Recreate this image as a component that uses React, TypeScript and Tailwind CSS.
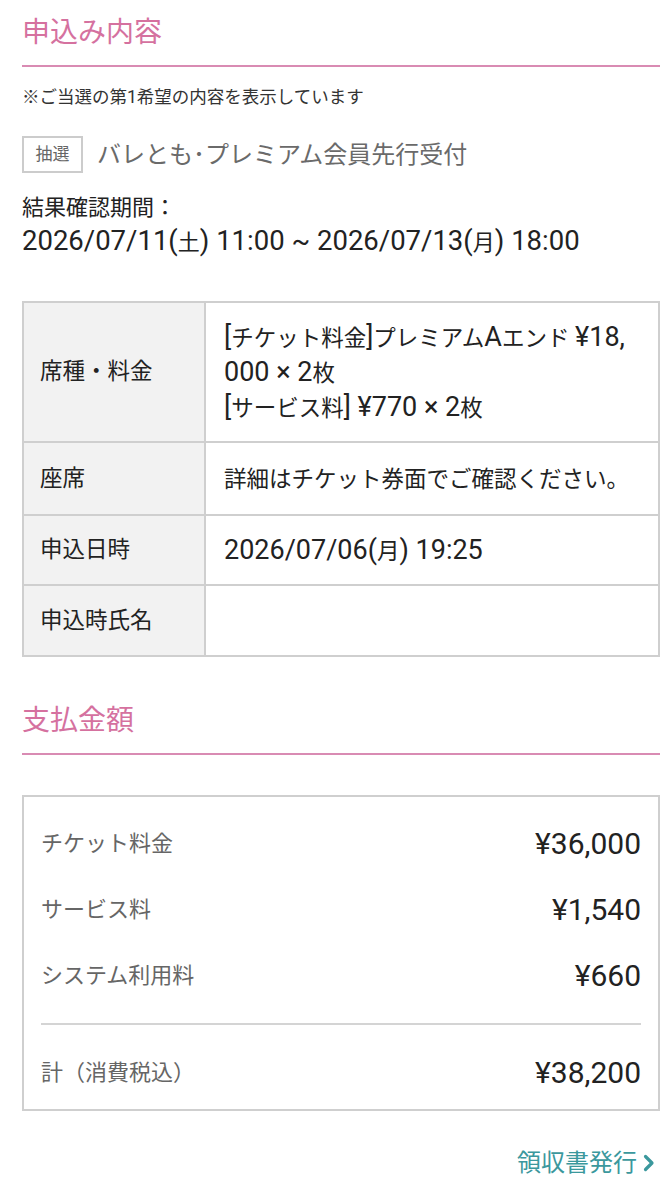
import type { ReactNode } from "react";

const font = { fontFamily: 'Roboto, "Noto Sans CJK JP", sans-serif' };

// latin runs render larger than the kana/kanji around them
function L({ children, wide }: { children: ReactNode; wide?: boolean }) {
  return <span className={wide ? "text-[1.25em]" : "text-[1.2em]"}>{children}</span>;
}

function SectionTitle({ children }: { children: string }) {
  return (
    <div className="border-b-2 border-[#d98bb3] pb-[12px]">
      <h2 className="text-[28px] leading-[40px] text-[#d5719f]">{children}</h2>
    </div>
  );
}

const rows: { label: string; value: ReactNode; h: string }[] = [
  {
    label: "席種・料金",
    value: (
      <>
        <div className="whitespace-nowrap">
          <L>[</L>チケット料金<L>]</L>プレミアム<L>A</L>エンド <L>¥18,</L>
        </div>
        <div className="whitespace-nowrap">
          <L>000 × 2</L>枚
        </div>
        <div className="whitespace-nowrap">
          <L>[</L>サービス料<L>] ¥770 × 2</L>枚
        </div>
      </>
    ),
    h: "h-[138px]",
  },
  { label: "座席", value: "詳細はチケット券面でご確認ください。", h: "h-[73px]" },
  {
    label: "申込日時",
    value: (
      <>
        <L>2026/07/06(</L>月<L>) 19:25</L>
      </>
    ),
    h: "h-[70px]",
  },
  { label: "申込時氏名", value: "", h: "h-[71px]" },
];

const fees = [
  { label: "チケット料金", value: "¥36,000" },
  { label: "サービス料", value: "¥1,540" },
  { label: "システム利用料", value: "¥660" },
];

export default function App() {
  return (
    <div style={font} className="w-[666px] min-h-[1200px] bg-white pl-[22px] pr-[6px] pt-[13px] text-[#222]">
      <SectionTitle>申込み内容</SectionTitle>

      <p className="mt-[19px] text-[17.5px] leading-[22px] text-[#333]">※ご当選の第1希望の内容を表示しています</p>

      <div className="mt-[28px] flex items-center gap-[14px]">
        <span className="flex h-[37px] w-[61px] items-center justify-center border-2 border-[#cccccc] text-[17px] text-[#666]">
          抽選
        </span>
        <span className="text-[24px] leading-[32px] text-[#6a6a6a]">バレとも･プレミアム会員先行受付</span>
      </div>

      <p className="mt-[19px] text-[22px] leading-[32px]">結果確認期間：</p>
      <p className="text-[22px] leading-[34px]">
        <L wide>2026/07/11(</L>土<L wide>) 11:00 ~ 2026/07/13(</L>月<L wide>) 18:00</L>
      </p>

      <div className="mt-[41px] border-2 border-[#cfcfcf] text-[22.5px]">
        {rows.map((r, i) => (
          <div key={r.label} className={`flex ${r.h} ${i > 0 ? "border-t-2 border-[#cfcfcf]" : ""}`}>
            <div className="flex w-[182px] shrink-0 items-center border-r-2 border-[#cfcfcf] bg-[#f2f2f2] pl-[16px]">
              {r.label}
            </div>
            <div className="flex items-center pl-[18px] pr-[8px] leading-[34px]">
              <div>{r.value}</div>
            </div>
          </div>
        ))}
      </div>

      <div className="mt-[44px]">
        <SectionTitle>支払金額</SectionTitle>
      </div>

      <div className="mt-[40px] border-2 border-[#cfcfcf] px-[17px] pt-[13px] pb-[4px]">
        {fees.map((f) => (
          <div key={f.label} className="flex h-[66px] items-center justify-between">
            <span className="text-[22px] text-[#666]">{f.label}</span>
            <span className="text-[30px] text-[#222]">{f.value}</span>
          </div>
        ))}
        <div className="mt-[15px] border-t-2 border-[#d4d4d4]" />
        <div className="mt-[14px] flex h-[66px] items-center justify-between">
          <span className="text-[22px] text-[#666]">計（消費税込）</span>
          <span className="text-[30px] text-[#222]">¥38,200</span>
        </div>
      </div>

      <div className="mt-[36px] flex justify-end pr-[5px]">
        <span className="flex items-center gap-[6px] text-[24px] leading-[32px] text-[#3b989d]">
          領収書発行
          <svg width="12" height="18" viewBox="0 0 12 18" fill="none">
            <path d="M2.5 2.5 L9 9 L2.5 15.5" stroke="currentColor" strokeWidth="3.2" strokeLinecap="round" strokeLinejoin="round" />
          </svg>
        </span>
      </div>
    </div>
  );
}
